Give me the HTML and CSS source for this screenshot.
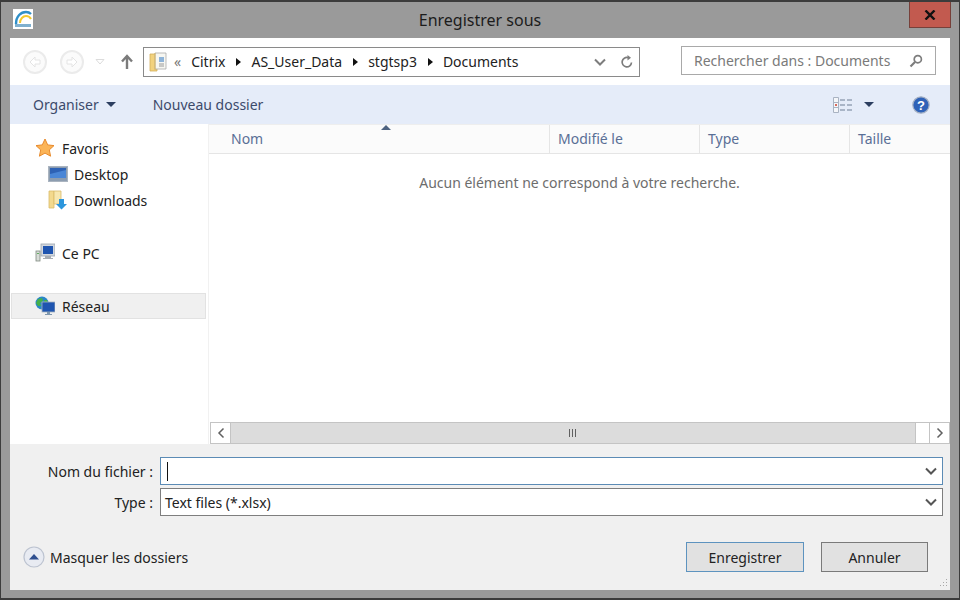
FILE: index.html
```html
<!DOCTYPE html>
<html>
<head>
	<meta charset="utf-8">
	<link rel="stylesheet" href="styles.css">
</head>
<body>
	<div class="window">
		<div class="titlebar">
			<svg class="app-icon" viewBox="0 0 20 20">
				<rect width="20" height="20" fill="#fff"/>
				<path d="M3 15C3 7 8 3 13 3c2 0 4 1 5 2" fill="none" stroke="#2f8fc8" stroke-width="2.4"/>
				<path d="M7 14c0-4 3-7 6-7 2 0 4 1 5 3" fill="none" stroke="#f3c92f" stroke-width="2"/>
				<rect x="2" y="15" width="16" height="3" fill="#7fb0cf"/>
			</svg>
			<div class="title">Enregistrer sous</div>
			<div class="close">
				<svg viewBox="0 0 12 10" width="12" height="10"><path d="M1.5 .5l9 9M10.5 .5l-9 9" stroke="#111" stroke-width="2.4" fill="none"/></svg>
			</div>
		</div>
		<div class="dialog">
			<div class="navbar">
				<svg class="nav-round" viewBox="0 0 26 26"><circle cx="13" cy="13" r="11" fill="#fbfbfb" stroke="#ebebeb" stroke-width="2"/><path d="M18 11h-5V8l-5 5 5 5v-3h5z" fill="#fff" stroke="#e4e4e4"/></svg>
				<svg class="nav-round" viewBox="0 0 26 26"><circle cx="13" cy="13" r="11" fill="#fbfbfb" stroke="#ebebeb" stroke-width="2"/><path d="M8 11h5V8l5 5-5 5v-3H8z" fill="#fff" stroke="#e4e4e4"/></svg>
				<svg class="nav-drop" viewBox="0 0 10 6"><path d="M1 .5h8L5 5z" fill="#fff" stroke="#dcdcdc"/></svg>
				<svg class="nav-up" viewBox="0 0 14 16"><path d="M7 15V3M2 7.5L7 2l5 5.5" fill="none" stroke="#7b7b7b" stroke-width="2.4"/></svg>
				<div class="address">
					<svg class="addr-icon" viewBox="0 0 18 20">
						<path d="M1 2h7v17H1z" fill="#f2d27e" stroke="#d3ae5a" stroke-width=".8"/>
						<path d="M6 1h11v16H6z" fill="#f7f7f2" stroke="#a9a9a9" stroke-width=".8"/>
						<path d="M6 1v17" stroke="#d8b765"/>
						<rect x="10" y="5" width="5" height="5" fill="#8fb4d9"/>
						<path d="M10 12h5M10 14h5" stroke="#9a9a9a"/>
					</svg>
					<span class="chevrons">«</span>
					<span class="crumb">Citrix</span><i class="sep"></i>
					<span class="crumb">AS_User_Data</span><i class="sep"></i>
					<span class="crumb">stgtsp3</span><i class="sep"></i>
					<span class="crumb">Documents</span>
					<svg class="addr-down" viewBox="0 0 12 8"><path d="M1 1.5l5 5 5-5" fill="none" stroke="#7d7d7d" stroke-width="2"/></svg>
					<svg class="addr-refresh" viewBox="0 0 14 14"><path d="M11.5 7.5A4.7 4.7 0 1 1 8 2.6" fill="none" stroke="#7d7d7d" stroke-width="1.7"/><path d="M7.5 0v5.4L11 2.7z" fill="#7d7d7d"/></svg>
				</div>
				<div class="search">
					<span>Rechercher dans : Documents</span>
					<svg viewBox="0 0 14 14" width="14" height="14"><circle cx="8.8" cy="5.2" r="3.6" fill="none" stroke="#7d7d7d" stroke-width="1.7"/><path d="M6 8L1.5 12.5" stroke="#7d7d7d" stroke-width="2.2"/></svg>
				</div>
			</div>
			<div class="toolbar">
				<span class="tool">Organiser</span><i class="tool-caret"></i>
				<span class="tool tool-new">Nouveau dossier</span>
				<svg class="view-icon" viewBox="0 0 20 16">
					<path d="M1.5 .5h5v15h-5z" fill="#f4f6fa" stroke="#a9b3c2"/>
					<path d="M1.5 5.5h5M1.5 10.5h5" stroke="#a9b3c2"/>
					<rect x="3" y="7" width="2" height="2" fill="#d86b5d"/>
					<path d="M8 3h5M15 3h5M8 8h5M15 8h5M8 13h5M15 13h5" stroke="#6f7f95"/>
				</svg>
				<i class="tool-caret view-caret"></i>
				<svg class="help-icon" viewBox="0 0 18 18">
					<circle cx="9" cy="9" r="8.2" fill="#2f62b8" stroke="#a6b1c4" stroke-width="1.2"/>
					<text x="9" y="13.5" class="help-mark">?</text>
				</svg>
			</div>
			<div class="middle">
				<div class="sidebar">
					<div class="nav-item">
						<svg viewBox="0 0 20 20"><path d="M10 1l2.7 5.9 6.3.7-4.700 4.300 1.300 6.300L10 15.100l-5.600 3.100 1.300-6.300L1 7.600l6.300-.7z" fill="#fbb457" stroke="#e88a2c"/></svg>
						<span>Favoris</span>
					</div>
					<div class="nav-item nav-sub">
						<svg viewBox="0 0 20 18"><rect x=".5" y="1.500" width="19" height="15" fill="#8d9db0" stroke="#aab4c0"/><rect x="2" y="3" width="16" height="10" fill="#2e62b5"/><path d="M2 9l16-4v8H2z" fill="#4a86d6"/></svg>
						<span>Desktop</span>
					</div>
					<div class="nav-item nav-sub">
						<svg viewBox="0 0 20 20"><path d="M1 1h5v17H1z" fill="#f3d98e" stroke="#d9bb6a" stroke-width=".8"/><path d="M6 1h7v13H6z" fill="#f7e7b0" stroke="#d9bb6a" stroke-width=".8"/><path d="M11 9h5v5h3l-5.500 5.500L8 14h3z" fill="#2d96dc"/></svg>
						<span>Downloads</span>
					</div>
					<div class="nav-item nav-gap">
						<svg viewBox="0 0 20 20"><rect x="6" y="1" width="14" height="12" fill="#d3d8de" stroke="#9aa4ae" stroke-width=".8"/><rect x="8" y="3" width="10" height="8" fill="#1f55b0"/><path d="M10 13h6v2h2v1H8v-1h2z" fill="#a7adb3"/><rect x="1" y="8" width="4" height="10" fill="#d8dcd8" stroke="#7f8a80" stroke-width=".8"/><rect x="2" y="10" width="2" height="1" fill="#5fae5f"/></svg>
						<span>Ce PC</span>
					</div>
					<div class="nav-item nav-gap nav-selected">
						<svg viewBox="0 0 20 20"><circle cx="7" cy="7" r="6.500" fill="#2a86c8"/><path d="M3 3l4-1 1 3-3 2 1 3-3 0-2-3zM9 4l3 0 1 3-3 1z" fill="#44b04a"/><rect x="7" y="6" width="13" height="10" fill="#1f55b0" stroke="#a8b3bf" stroke-width=".8"/><path d="M12 16h3v2h2v1h-7v-1h2z" fill="#7f97ad"/></svg>
						<span>Réseau</span>
					</div>
				</div>
				<div class="files">
					<div class="columns">
						<div class="col col-name">Nom<i class="sort-mark"></i></div>
						<div class="col col-date">Modifié le</div>
						<div class="col col-type">Type</div>
						<div class="col col-size">Taille</div>
					</div>
					<div class="empty">Aucun élément ne correspond à votre recherche.</div>
					<div class="scrollbar">
						<div class="scroll-btn"><svg viewBox="0 0 8 12" width="8" height="12"><path d="M6.500 1.500L2 6l4.500 4.500" fill="none" stroke="#606060" stroke-width="1.500"/></svg></div>
						<div class="scroll-thumb"><span class="grip"></span></div>
						<div class="scroll-rest"></div>
						<div class="scroll-btn"><svg viewBox="0 0 8 12" width="8" height="12"><path d="M1.500 1.500L6 6l-4.500 4.500" fill="none" stroke="#606060" stroke-width="1.500"/></svg></div>
					</div>
				</div>
			</div>
			<div class="bottom">
				<div class="form-row">
					<label>Nom du fichier :</label>
					<div class="combo combo-focus"><i class="caret-line"></i><svg viewBox="0 0 12 8"><path d="M1 1.500l5 5 5-5" fill="none" stroke="#555" stroke-width="2"/></svg></div>
				</div>
				<div class="form-row">
					<label>Type :</label>
					<div class="combo"><span>Text files (*.xlsx)</span><svg viewBox="0 0 12 8"><path d="M1 1.500l5 5 5-5" fill="none" stroke="#555" stroke-width="2"/></svg></div>
				</div>
				<div class="actions">
					<svg class="hide-icon" viewBox="0 0 22 22"><circle cx="11" cy="11" r="10" fill="#e8ebf2" stroke="#bcc3d0" stroke-width="1.200"/><path d="M6 13.500h10L11 8z" fill="#2f4f8f"/></svg>
					<span class="hide-label">Masquer les dossiers</span>
					<div class="btn btn-default">Enregistrer</div>
					<div class="btn btn-cancel">Annuler</div>
				</div>
				<svg class="grip-corner" viewBox="0 0 10 10"><path d="M8 1h1v1H8zM5 4h1v1H5zM8 4h1v1H8zM2 7h1v1H2zM5 7h1v1H5zM8 7h1v1H8z" fill="#a8a8a8"/></svg>
			</div>
		</div>
	</div>
</body>
</html>
```

FILE: styles.css
```css
*{
	box-sizing: border-box;
}
html,body{
	margin: 0;
	height: 100%;
}
body{
	font-family: "Noto Sans", sans-serif;
	font-size: 14px;
	color: #222;
}
.window{
	width: 960px;
	height: 600px;
	display: flex;
	flex-direction: column;
	background: #9a9a9a;
	border: 1px solid #3c3c3c;
	border-width: 2px 1px 2px 1px;
}
.titlebar{
	height: 36px;
	flex: none;
	display: flex;
	align-items: flex-start;
	position: relative;
}
.app-icon{
	width: 20px;
	height: 20px;
	margin: 7px 0 0 12px;
}
.title{
	position: absolute;
	left: 0;
	right: 0;
	top: 7px;
	text-align: center;
	font-size: 16px;
	color: #1c1c1c;
}
.close{
	margin-left: auto;
	margin-right: 8px;
	width: 42px;
	height: 26px;
	background: #c25a4f;
	border: 1px solid #77403a;
	border-top: 0;
	display: flex;
	align-items: center;
	justify-content: center;
}
.dialog{
	flex: 1;
	margin: 0 9px 8px 9px;
	background: #fff;
	display: flex;
	flex-direction: column;
}

/* address row */
.navbar{
	height: 47px;
	flex: none;
	display: flex;
	align-items: center;
	padding: 0 14px 0 12px;
}
.nav-round{
	width: 26px;
	height: 26px;
	margin-right: 11px;
}
.nav-drop{
	width: 10px;
	height: 6px;
	margin: 0 0 0 -1px;
}
.nav-up{
	width: 14px;
	height: 16px;
	margin: 0 9px 0 15px;
}
.address{
	width: 497px;
	height: 30px;
	border: 1px solid #8a8a8a;
	display: flex;
	align-items: center;
	padding-left: 5px;
	white-space: nowrap;
}
.addr-icon{
	width: 18px;
	height: 20px;
	margin-right: 7px;
}
.chevrons{
	color: #777;
	margin-right: 10px;
}
.crumb{
	color: #222;
}
.sep{
	width: 0;
	height: 0;
	margin: 0 10px 0 11px;
	border-left: 5px solid #111;
	border-top: 4px solid transparent;
	border-bottom: 4px solid transparent;
}
.addr-down{
	width: 12px;
	height: 8px;
	margin-left: auto;
}
.addr-refresh{
	width: 14px;
	height: 14px;
	margin: 0 5px 0 14px;
}
.search{
	width: 255px;
	height: 29px;
	margin: -2px 0 0 41px;
	border: 1px solid #a9a9a9;
	display: flex;
	align-items: center;
	justify-content: space-between;
	padding: 0 12px;
	color: #7a7a7a;
	white-space: nowrap;
}

/* toolbar */
.toolbar{
	height: 39px;
	flex: none;
	background: #e5ecf9;
	display: flex;
	align-items: center;
	padding-left: 23px;
	color: #3c4a6b;
}
.tool-caret{
	width: 0;
	height: 0;
	margin-left: 7px;
	border-top: 5px solid #2c3e60;
	border-left: 5px solid transparent;
	border-right: 5px solid transparent;
}
.tool-new{
	margin-left: 37px;
}
.view-icon{
	width: 20px;
	height: 16px;
	margin-left: auto;
}
.view-caret{
	margin-left: 12px;
}
.help-icon{
	width: 18px;
	height: 18px;
	margin: 0 20px 0 38px;
}
.help-mark{
	font-family: "Liberation Sans", sans-serif;
	font-size: 13px;
	font-weight: bold;
	fill: #fff;
	text-anchor: middle;
}

/* sidebar and list */
.middle{
	flex: 1;
	display: flex;
	min-height: 0;
}
.sidebar{
	width: 199px;
	flex: none;
	padding-top: 11px;
	border-right: 1px solid #f1f1f1;
}
.nav-item{
	height: 26px;
	display: flex;
	align-items: center;
	padding-left: 24px;
	margin-right: 2px;
	margin-left: 1px;
	gap: 7px;
}
.nav-item svg{
	width: 20px;
	height: 20px;
	flex: none;
}
.nav-sub{
	padding-left: 37px;
	gap: 6px;
}
.nav-gap{
	margin-top: 27px;
}
.nav-selected{
	background: #f0f0f0;
	border: 1px solid #e2e2e2;
	padding-left: 23px;
}
.files{
	flex: 1;
	display: flex;
	flex-direction: column;
	min-width: 0;
}
.columns{
	height: 30px;
	flex: none;
	display: flex;
	background: #fbfbfb;
	border-bottom: 1px solid #e5e5e5;
	border-top: 1px solid #eee;
	color: #5a6f96;
}
.col{
	padding: 4px 0 0 8px;
	border-right: 1px solid #e5e5e5;
	position: relative;
}
.col-name{
	width: 341px;
	padding-left: 22px;
}
.col-date{
	width: 150px;
}
.col-type{
	width: 150px;
}
.col-size{
	flex: 1;
	border-right: 0;
}
.sort-mark{
	position: absolute;
	top: 0;
	left: 172px;
	width: 0;
	height: 0;
	border-bottom: 5px solid #4d6280;
	border-left: 5px solid transparent;
	border-right: 5px solid transparent;
}
.empty{
	flex: 1;
	text-align: center;
	padding-top: 19px;
	color: #6d6d6d;
}
.scrollbar{
	height: 22px;
	flex: none;
	display: flex;
	margin: 0 0 0 1px;
	border-top: 1px solid #c4c4c4;
	border-bottom: 1px solid #c4c4c4;
}
.scroll-btn{
	width: 21px;
	display: flex;
	align-items: center;
	justify-content: center;
	background: #fff;
	border-left: 1px solid #c4c4c4;
	border-right: 1px solid #c4c4c4;
}
.scroll-thumb{
	width: 685px;
	background: #dcdcdc;
	border-right: 1px solid #c4c4c4;
	display: flex;
	align-items: center;
	justify-content: center;
}
.grip{
	width: 9px;
	height: 8px;
	background: repeating-linear-gradient(90deg, #606060 0 1px, transparent 1px 3px);
}
.scroll-rest{
	flex: 1;
	background: #fff;
}

/* save form */
.bottom{
	height: 146px;
	flex: none;
	background: #f0f0f0;
	padding-top: 13px;
	position: relative;
}
.form-row{
	display: flex;
	align-items: center;
	height: 28px;
	margin-bottom: 3px;
	padding-right: 7px;
}
.form-row label{
	width: 150px;
	text-align: right;
	padding-right: 7px;
	flex: none;
}
.combo{
	flex: 1;
	height: 28px;
	background: #fff;
	border: 1px solid #7e7e7e;
	display: flex;
	align-items: center;
	padding: 0 5px 0 4px;
}
.combo-focus{
	border-color: #5b8bb5;
}
.combo svg{
	width: 12px;
	height: 8px;
	margin-left: auto;
}
.caret-line{
	width: 1px;
	height: 19px;
	margin-left: 2px;
	background: #111;
}
.actions{
	display: flex;
	align-items: center;
	margin-top: 26px;
	padding-left: 13px;
}
.hide-icon{
	width: 22px;
	height: 22px;
	margin-right: 5px;
}
.btn{
	height: 30px;
	display: flex;
	align-items: center;
	justify-content: center;
	background: #e1e1e1;
	border: 1px solid #7a7a7a;
}
.btn-default{
	width: 118px;
	margin-left: auto;
	border-color: #5d93bf;
}
.btn-cancel{
	width: 107px;
	margin: 0 22px 0 17px;
}
.grip-corner{
	position: absolute;
	right: 2px;
	bottom: 2px;
	width: 10px;
	height: 10px;
}
```
